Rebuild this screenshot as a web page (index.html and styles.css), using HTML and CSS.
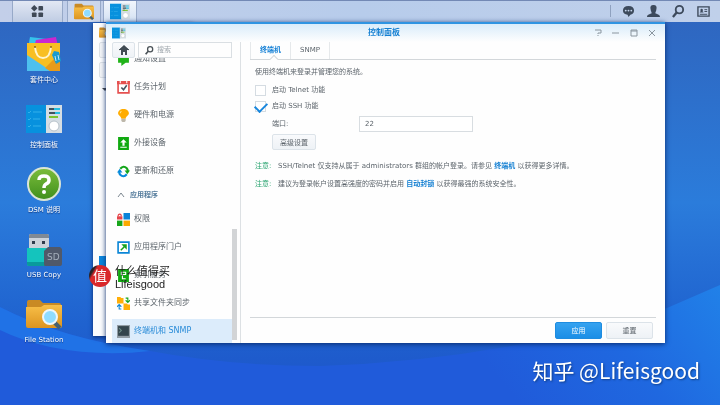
FILE: index.html
```html
<!DOCTYPE html>
<html lang="zh-CN">
<head>
<meta charset="utf-8">
<title>控制面板</title>
<link rel="stylesheet" href="styles.css">
</head>
<body>
<svg class="defs" width="0" height="0" aria-hidden="true">
  <defs>
    <linearGradient id="gold" x1="0" y1="0" x2="0" y2="1"><stop offset="0" stop-color="#f8bf48"/><stop offset="1" stop-color="#dc9420"/></linearGradient>
    <linearGradient id="green" x1="0" y1="0" x2="0" y2="1"><stop offset="0" stop-color="#7cbd3c"/><stop offset="1" stop-color="#3f8f1c"/></linearGradient>
    <linearGradient id="sky" x1="0" y1="0" x2="0" y2="1"><stop offset="0" stop-color="#2f64bd"/><stop offset=".5" stop-color="#2b7cdb"/><stop offset=".8" stop-color="#1f62cf"/><stop offset="1" stop-color="#1d52c8"/></linearGradient>
    <linearGradient id="sea" gradientUnits="userSpaceOnUse" x1="720" y1="285" x2="540" y2="430"><stop offset="0" stop-color="#2181e8"/><stop offset=".5" stop-color="#1f68e0"/><stop offset="1" stop-color="#205bda"/></linearGradient>
  </defs>
  <symbol id="folder" viewBox="0 0 36 30">
    <path d="M1 3q0-2 2-2h11l3 3h16q2 0 2 2v22H1z" fill="#c98a24"/>
    <path d="M0 8h15l3-2h18v21q0 2-2 2H2q-2 0-2-2z" fill="url(#gold)"/>
    <path d="M28 23l6 6" stroke="#466172" stroke-width="4"/>
    <circle cx="24" cy="18" r="7" fill="#8fdcff" stroke="#eef7fb" stroke-width="2"/>
  </symbol>
  <symbol id="panel" viewBox="0 0 36 30">
    <path d="M0 1h21v28H0z" fill="#0791de"/><path d="M20 1h16v28H20z" fill="#d5dde3"/>
    <path d="M2 8l1 1 2-2M2 15l1 1 2-2M2 22l1 1 2-2M7 8h9M7 15h7M7 22h8" fill="none" stroke="#35b0ea" stroke-width="1"/>
    <path d="M23 5h5M23 9h6M23 13h4" stroke="#41525c" stroke-width="2"/>
    <path d="M28 5h6M29 9h5" stroke="#25bde0" stroke-width="2"/><path d="M23 13h9" stroke="#7ec52c" stroke-width="2"/>
    <circle cx="28" cy="22" r="5" fill="#fff" stroke="#b6c1c9"/>
  </symbol>
  <symbol id="search" viewBox="0 0 14 14"><circle cx="8" cy="5" r="4" fill="none" stroke="currentColor" stroke-width="2"/><path d="M5 8l-4 5" stroke="currentColor" stroke-width="2.5"/></symbol>
</svg>

<svg class="wallpaper" viewBox="0 0 720 405" preserveAspectRatio="none" aria-hidden="true">
  <path d="M0 0h720v405H0z" fill="url(#sky)"/>
  <path d="M0 307Q60 338 150 351Q230 366 320 366Q500 360 667 308L720 285V405H0z" fill="url(#sea)"/>
  <path d="M0 307Q60 338 150 351Q100 357 50 347Q20 340 0 330z" fill="#2072e6"/>
</svg>

<header class="taskbar">
  <button class="task task-menu" aria-label="主菜单"><svg viewBox="0 0 14 14"><path d="M3.500 0l3.500 3.500-3.500 3.500L0 3.500z" fill="#3f4956"/><g fill="#3f4956"><rect x="8" y="1" width="5" height="5" rx="1"/><rect x="1" y="8" width="5" height="5" rx="1"/><rect x="8" y="8" width="5" height="5" rx="1"/></g></svg></button>
  <button class="task" aria-label="File Station"><svg><use href="#folder"/></svg></button>
  <button class="task task-active" aria-label="控制面板"><svg><use href="#panel"/></svg></button>
  <nav class="tray">
    <button aria-label="通知"><svg viewBox="0 0 14 14"><path d="M7 1c4 0 6 2 6 5s-2 4-4 4.500L7 13l-1-2.500C3 10 1 9 1 6s2-5 6-5z" fill="#3d4a5c"/><g fill="#c5d5ec"><circle cx="4" cy="6" r="1"/><circle cx="7" cy="6" r="1"/><circle cx="10" cy="6" r="1"/></g></svg></button>
    <button aria-label="用户"><svg viewBox="0 0 14 14"><path d="M7 0c3 0 4 2 3 5 0 2-1 2-1 4 1 1 5 1 5 4H0c0-3 4-3 5-4 0-2-1-2-1-4C3 2 4 0 7 0z" fill="#3d4a5c"/></svg></button>
    <button aria-label="搜索"><svg><use href="#search"/></svg></button>
    <button aria-label="小工具"><svg viewBox="0 0 14 14"><path d="M1 2h12v10H1z" fill="none" stroke="#3d4a5c" stroke-width="1.500"/><path d="M3 10h8M8 5h3M8 7h3" stroke="#3d4a5c"/><path d="M3 8q0-1 1-1-1-3 1-3t1 3q1 0 1 1z" fill="#3d4a5c"/></svg></button>
  </nav>
</header>

<nav class="desktop">
  <a href="#store"><svg viewBox="0 0 36 36"><path d="M4 1l25 3v8H2z" fill="#36c3ec"/><path d="M10 4l20-3 2 10H8z" fill="#cb27cf"/><path d="M1 7h33v28H1z" fill="#f8bf22"/><path d="M1 19l24 16H1z" fill="#4dc0ef"/><path d="M19 32L34 17v18H24z" fill="#e99b19"/><path d="M9 11q1 11 8 11t8-11" fill="none" stroke="#fff5cd" stroke-width="2"/><circle cx="9" cy="11" r="1" fill="#8c6313"/><circle cx="25" cy="11" r="1" fill="#8c6313"/><path d="M28 15l5 1 2 9-5 3-4-9z" fill="#189bcf"/><path d="M29 20l1 5M32 19l1 5" stroke="#bfeaff"/></svg>套件中心</a>
  <a href="#panel-app"><svg><use href="#panel"/></svg>控制面板</a>
  <a href="#help"><svg viewBox="0 0 36 36"><circle cx="18" cy="18" r="16" fill="url(#green)" stroke="#dbe5d6" stroke-width="2"/><path d="M13 14q0-4 5-4t5 4q0 3-3 4-2 1-2 4" fill="none" stroke="#fff" stroke-width="3.500"/><circle cx="18" cy="26" r="2" fill="#fff"/></svg>DSM 说明</a>
  <a href="#usb"><svg viewBox="0 0 36 36"><path d="M3 17V5q0-2 2-2h16q2 0 2 2v12z" fill="#cbd2da"/><path d="M3 5q0-2 2-2h16q2 0 2 2v2H3z" fill="#7f8994"/><path d="M6 10h3v3H6zM16 10h3v3h-3z" fill="#303c4c"/><path d="M1 17h24v18H3q-2 0-2-2z" fill="#14c4bd"/><path d="M1 31h24v4H3q-2 0-2-2z" fill="#099a9c"/><path d="M22 16h12l2 2v15q0 2-2 2H19q-1 0-1-2V20z" fill="#50596a"/><text class="sd" x="21" y="29">SD</text></svg>USB Copy</a>
  <a href="#files"><svg><use href="#folder"/></svg>File Station</a>
</nav>

<section class="window-back" aria-hidden="true">
  <svg><use href="#folder"/></svg>
  <i class="stub"></i><i class="stub"></i><i class="arrow"></i><i class="progress"></i>
</section>

<main class="window">
  <header class="titlebar">
    <svg class="app-icon"><use href="#panel"/></svg>
    <h1>控制面板</h1>
    <div class="controls">
      <button aria-label="帮助"><svg viewBox="0 0 8 8"><path d="M1 1h6v3H4v1M4 6v1" /></svg></button>
      <button aria-label="最小化"><svg viewBox="0 0 8 8"><path d="M0 4h7"/></svg></button>
      <button aria-label="最大化"><svg viewBox="0 0 8 8"><path d="M1 1h6v6H1zM1 2h6"/></svg></button>
      <button aria-label="关闭"><svg viewBox="0 0 8 8"><path d="M1 1l6 6M7 1L1 7"/></svg></button>
    </div>
  </header>
  <div class="columns">
    <aside class="sidebar">
      <div class="tools">
        <button class="home" aria-label="主页"><svg viewBox="0 0 10 10"><path d="M0 5l5-5 5 5M2 5l3-3 3 3v5H6V7H4v3H2z" fill="#414b53"/><path d="M0 5l5-4 5 4" fill="none" stroke="#414b53"/></svg></button>
        <label class="search"><svg><use href="#search"/></svg><input type="search" placeholder="搜索" aria-label="搜索"></label>
      </div>
      <nav class="list">
        <a href="#n1"><svg viewBox="0 0 12 12"><path d="M1 1h10v8H8l-4 3V9H1z" fill="#21b319"/></svg>通知设置</a>
        <a href="#n2"><svg viewBox="0 0 12 12"><path d="M1 1h10v10H1z" fill="#fff" stroke="#e5504f" stroke-width="1.500"/><path d="M0 0h12v3H0z" fill="#e5504f"/><path d="M3 0v2M9 0v2" stroke="#fff"/><path d="M4 6l2 2 3-4" fill="none" stroke="#475563" stroke-width="1.500"/></svg>任务计划</a>
        <a href="#n3"><svg viewBox="0 0 12 12"><path d="M6 0c3 0 5 2 5 4S8 7 8 9H4c0-2-3-3-3-5s2-4 5-4z" fill="#ffac00"/><path d="M4 9h4v2l-1 1H5l-1-1z" fill="#bdb7aa"/><path d="M4 2q-1 1-1 2" stroke="#ffe184" fill="none"/></svg>硬件和电源</a>
        <a href="#n4"><svg viewBox="0 0 12 12"><path d="M1 0h10v12H1z" fill="#10a910"/><path d="M6 2l3 3H7v3H5V5H3zM3 9h6v1H3z" fill="#fff"/></svg>外接设备</a>
        <a href="#n5"><svg viewBox="0 0 12 12"><path d="M3 3.500Q6 0 9 3q1 1 1 3" fill="none" stroke="#14a51a" stroke-width="2"/><path d="M7 5h5L9.500 8.500z" fill="#14a51a"/><path d="M9 8.500Q6 12 3 9 2 8 2 6" fill="none" stroke="#078bdb" stroke-width="2"/><path d="M0 7h5L2.500 3.500z" fill="#078bdb"/></svg>更新和还原</a>
        <h2><svg viewBox="0 0 8 8"><path d="M1 6l3-4 3 4" fill="none" stroke="#7c8790"/></svg>应用程序</h2>
        <a href="#n6"><svg viewBox="0 0 12 12"><path d="M0 3h5v3H0z" fill="#e5444a"/><path d="M1 3q0-2 1.500-2T4 3" fill="none" stroke="#e5444a"/><path d="M6 0h6v6H6z" fill="#0b83d8"/><path d="M0 7h5v5H0z" fill="#18a61b"/><path d="M6 7h6v5H6z" fill="#fca900"/></svg>权限</a>
        <a href="#n7"><svg viewBox="0 0 12 12"><path d="M1 1h10v10H1z" fill="#fff" stroke="#0b86d6" stroke-width="1.500"/><path d="M4 3h5v5L7 6 4 9 3 8l3-3z" fill="#16a21d"/></svg>应用程序门户</a>
        <a href="#n8"><svg viewBox="0 0 12 12"><path d="M1 0h10v12H1z" fill="#10a910"/><path d="M4 3h4v2H4zM5 5v4h3" fill="none" stroke="#fff"/></svg>索引服务</a>
        <a href="#n9"><svg viewBox="0 0 12 12"><path d="M0 0h3l1 1h2v5H0zM6 6h3l1 1h2v5H6z" fill="#ffae08"/><path d="M8 1h2v3M8 3l2 2 2-2" fill="none" stroke="#17a51c"/><path d="M4 11H2V8M0 9l2-2 2 2" fill="none" stroke="#0b86d6"/></svg>共享文件夹同步</a>
        <a href="#n10" class="current"><svg viewBox="0 0 12 12"><path d="M0 0h12v12H0z" fill="#929da5"/><path d="M1 1h10v9H1z" fill="#34454d"/><path d="M2 3l2 2-2 2" fill="none" stroke="#6c8b87"/></svg>终端机和 SNMP</a>
      </nav>
      <i class="scrollbar"></i>
    </aside>
    <section class="content">
      <nav class="tabs"><button class="selected">终端机</button><button>SNMP</button></nav>
      <form class="form">
        <p>使用终端机来登录并管理您的系统。</p>
        <div class="checks">
          <label><input type="checkbox">启动 Telnet 功能</label>
          <label><input type="checkbox" checked>启动 SSH 功能</label>
        </div>
        <div class="field"><label for="port">端口:</label><input id="port" type="text" value="22"></div>
        <button type="button" class="button advanced">高级设置</button>
        <div class="notes">
          <p><b>注意:</b><span>SSH/Telnet 仅支持从属于 administrators 群组的帐户登录。请参见 <a href="#terminal">终端机</a> 以获得更多详情。</span></p>
          <p><b>注意:</b><span>建议为登录帐户设置高强度的密码并启用 <a href="#block">自动封锁</a> 以获得最强的系统安全性。</span></p>
        </div>
      </form>
      <footer class="actions"><button class="button primary">应用</button><button class="button">重置</button></footer>
    </section>
  </div>
</main>

<div class="stamp"><span class="seal">值</span><p>什么值得买<br>Lifeisgood</p></div>
<div class="signature">知乎 @Lifeisgood</div>
</body>
</html>
```

FILE: styles.css
```css
* { box-sizing: border-box; }
body {
  margin: 0;
  min-height: 100vh;
  overflow: hidden;
  background: #1f58d8;
  color: #5c646b;
  font: 7px/16px "DejaVu Sans", "Noto Sans CJK SC", sans-serif;
}
button, input { font: inherit; color: inherit; }
button { padding: 0; border: 0; background: none; }
a { color: inherit; text-decoration: none; }
h1, h2, p { margin: 0; }
svg { display: block; flex: none; }
.defs { position: absolute; }
.wallpaper { position: fixed; inset: 0; width: 100%; height: 100%; z-index: -1; }

.taskbar {
  display: flex;
  height: 22px;
  padding-left: 12px;
  border-top: 1px solid #7389b5;
  background: linear-gradient(90deg, #c3cfe9, #b7cceb 50%, #c0d0ea);
}
.task {
  display: grid;
  place-items: center;
  width: 34px;
  margin-right: 2px;
  border: solid #97a9c8;
  border-width: 0 1px;
  background: #ccd7ec;
}
.task svg { width: 20px; height: 17px; }
.task-menu { width: 51px; margin-right: 4px; background: linear-gradient(#e2e8f4, #bfcce3); }
.task-menu svg { width: 13px; height: 13px; }
.task-active { background: linear-gradient(#f2f6fc, #d3e1f3); }
.tray {
  display: flex;
  align-items: center;
  gap: 12px;
  height: 12px;
  margin: 4px 10px 0 auto;
  padding-left: 11px;
  border-left: 1px solid #8fa1bf;
  color: #3d4a5c;
}
.tray svg { width: 13px; height: 13px; }

.desktop {
  display: flex;
  flex-direction: column;
  gap: 15px;
  width: 88px;
  padding-top: 14px;
  color: #fff;
}
.desktop a {
  display: flex;
  flex-direction: column;
  align-items: center;
  gap: 2px;
  line-height: 13px;
  height: 50px;
  text-shadow: 0 1px 1px #123a80;
}
.desktop svg { width: 36px; height: 36px; }
.sd { fill: #a5afbb; font-size: 9px; text-shadow: none; }

.window-back {
  position: absolute;
  inset: 23px auto 69px 93px;
  width: 100px;
  padding: 4px 6px;
  background: #fbfcfd;
  box-shadow: 0 1px 4px #0a2b6a;
}
.window-back svg { width: 13px; height: 11px; }
.stub { display: block; height: 16px; margin-top: 4px; border: 1px solid #dde1e5; border-radius: 2px; background: #f3f5f7; }
.arrow { display: block; width: 6px; margin: 10px 3px; border: 3px solid transparent; border-top-color: #444; }
.progress { position: absolute; left: 6px; right: 6px; bottom: 69px; height: 11px; background: #0b86dc; }

.window {
  position: absolute;
  inset: 22px 55px 62px 106px;
  display: flex;
  flex-direction: column;
  border-top: 2px solid #2f94e2;
  background: #fefefe;
  box-shadow: 0 1px 5px #082a6c;
}
.titlebar {
  display: grid;
  grid-template-columns: 1fr auto 1fr;
  align-items: center;
  height: 18px;
  padding: 0 9px 0 6px;
  background: linear-gradient(#d9ecfa, #fefefe);
}
.app-icon { width: 14px; height: 12px; }
h1 { color: #137fd2; font-size: 8px; font-weight: bold; }
.controls { display: flex; justify-content: flex-end; gap: 10px; }
.controls svg { width: 8px; height: 8px; fill: none; stroke: #8b969f; }
.columns { display: flex; flex: 1; min-height: 0; }

.sidebar {
  position: relative;
  display: flex;
  flex-direction: column;
  width: 135px;
  padding: 0 8px 0 6px;
  border-right: 1px solid #dde1e4;
}
.tools { display: flex; gap: 3px; }
.home, .button { border: 1px solid #dce3e9; border-radius: 2px; background: linear-gradient(#f9fafc, #eef2f6); }
.home { display: grid; place-items: center; width: 23px; height: 16px; }
.home svg { width: 10px; height: 10px; }
.search { display: flex; flex: 1; align-items: center; gap: 3px; height: 16px; padding-left: 6px; border: 1px solid #dadfe3; color: #4a5257; }
.search svg { width: 9px; height: 9px; }
.search input { width: 100%; min-width: 0; height: 14px; padding: 0; border: 0; outline: 0; background: none; }
.search input::placeholder { color: #9fa7ad; }
.list {
  display: flex;
  flex: 1;
  flex-direction: column;
  justify-content: flex-end;
  gap: 4px;
  min-height: 0;
  overflow: hidden;
  font-size: 8px;
}
.list a { display: flex; flex: none; align-items: center; gap: 4px; height: 24px; padding-left: 5px; }
.list a svg { width: 13px; height: 13px; }
.list h2 { display: flex; flex: none; align-items: center; gap: 5px; height: 16px; padding-left: 5px; color: #557c9c; font-size: 7px; }
.list h2 svg { width: 8px; height: 8px; }
.list .current { background: #dcecfb; color: #2a8cd8; }
.scrollbar { position: absolute; right: 3px; bottom: 3px; width: 5px; height: 111px; background: #d2d4d6; }

.content { display: flex; flex: 1; flex-direction: column; padding: 0 9px; }
.tabs { display: flex; height: 18px; border-bottom: 1px solid #d3d7da; }
.tabs button { position: relative; padding: 0 9px 2px; border: solid #e6e9eb; border-width: 0 1px 0 0; }
.tabs .selected { border-left-width: 1px; color: #1681d6; font-weight: bold; }
.tabs .selected::after {
  content: "";
  position: absolute;
  bottom: -3px;
  left: 50%;
  width: 5px;
  height: 5px;
  border: solid #d3d7da;
  border-width: 1px 0 0 1px;
  background: #fefefe;
  transform: rotate(45deg);
}
.form { display: flex; flex: 1; flex-direction: column; gap: 2px; padding: 4px 5px; }
.checks label { display: flex; align-items: center; gap: 6px; }
.checks input { appearance: none; display: grid; justify-content: center; width: 11px; height: 11px; margin: 0; border: 1px solid #d5dce2; background: #fff; }
.checks input:checked::before {
  content: "";
  width: 10px;
  height: 6px;
  border: solid #1686dd;
  border-width: 0 0 2px 2px;
  transform: rotate(-45deg);
}
.field { display: flex; margin-left: 17px; }
.field label { width: 87px; }
.field input { width: 114px; height: 16px; padding: 0 5px; border: 1px solid #d8dde1; background: #fff; }
.button { width: 47px; height: 17px; }
.advanced { width: 44px; height: 16px; margin-left: 17px; }
.notes { display: flex; flex-direction: column; gap: 2px; margin-top: 6px; }
.notes p { display: flex; }
.notes b { width: 23px; flex: none; color: #27a36e; font-weight: normal; }
.notes a { color: #137fd2; font-weight: bold; }
.actions { display: flex; justify-content: flex-end; gap: 4px; padding: 4px 3px; border-top: 1px solid #d3d7da; }
.primary { border-color: #1e8ce0; background: linear-gradient(#35a2f0, #1b8ee6); color: #fff; }

.stamp {
  position: absolute;
  top: 265px;
  left: 89px;
  display: flex;
  align-items: flex-start;
  gap: 4px;
  color: #222;
  font: 11px/13px "Liberation Sans", "Noto Sans CJK SC", sans-serif;
}
.seal {
  display: grid;
  place-items: center;
  width: 22px;
  height: 22px;
  border-radius: 50%;
  background: linear-gradient(120deg, #252328 20%, #d9282b 28%);
  color: #fff;
  font-size: 14px;
}
.signature {
  position: absolute;
  right: 20px;
  bottom: 19px;
  color: #fff;
  font: 21px/32px "Noto Sans CJK SC", sans-serif;
  text-shadow: 1px 1px 2px #103f8a;
}
```
